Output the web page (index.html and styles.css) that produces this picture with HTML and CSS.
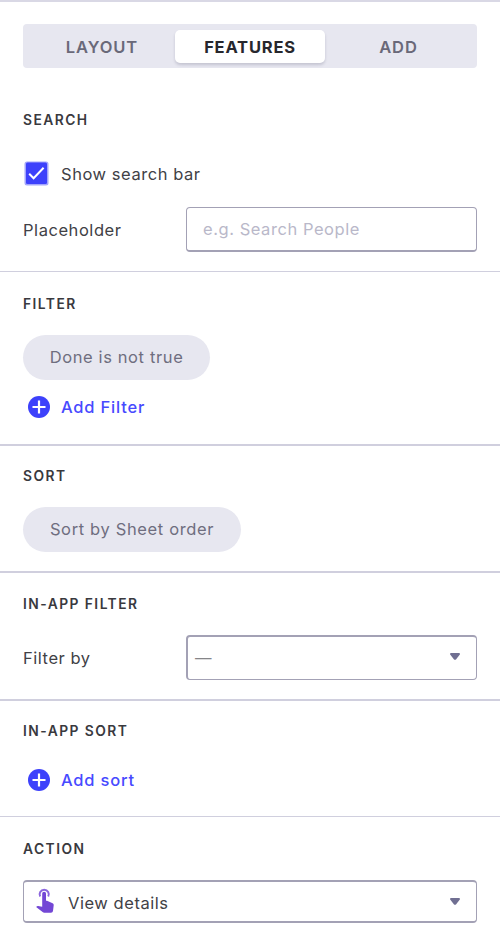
FILE: index.html
```html
<!DOCTYPE html>
<html lang="en">
<head>
<meta charset="utf-8">
<title>Features</title>
<link rel="stylesheet" href="styles.css">
</head>
<body>
<main class="panel">
  <nav class="tabs">
    <span class="tab tab-layout">LAYOUT</span>
    <span class="tab active">FEATURES</span>
    <span class="tab tab-add">ADD</span>
  </nav>
  <section class="section search">
    <h2>SEARCH</h2>
    <div class="check-row">
      <svg class="checkbox" viewBox="0 0 25 25"><rect x=".5" y=".5" width="24" height="24" rx="2.5" fill="#a3a5fb"/><rect x="2" y="1.5" width="21" height="21.5" rx="1.5" fill="#3d41fb"/><path d="M5.2 12.8l4.4 4.4 10-10.4" fill="none" stroke="#fff" stroke-width="2"/></svg>
      <span class="t-show">Show search bar</span>
    </div>
    <div class="field-row">
      <span class="t-placeholder">Placeholder</span>
      <div class="input"><span class="t-hint">e.g. Search People</span></div>
    </div>
  </section>
  <section class="section filter">
    <h2>FILTER</h2>
    <div class="chip chip-filter"><span>Done is not true</span></div>
    <div class="add">
      <svg class="plus" viewBox="0 0 22 22"><circle cx="11" cy="11" r="11"/><path d="M11 4.5v13M4.5 11h13"/></svg>
      <span class="t-addfilter">Add Filter</span>
    </div>
  </section>
  <section class="section sort">
    <h2>SORT</h2>
    <div class="chip chip-sort"><span>Sort by Sheet order</span></div>
  </section>
  <section class="section in-filter">
    <h2>IN-APP FILTER</h2>
    <div class="field-row">
      <span class="t-filterby">Filter by</span>
      <div class="input select"><span class="dash">—</span><svg class="caret" viewBox="0 0 10 7"><path d="M0 1.2Q0 0 1 0h8q1 0 1 1.2L6.2 6.2Q5 7.2 3.8 6.2z"/></svg></div>
    </div>
  </section>
  <section class="section in-sort">
    <h2>IN-APP SORT</h2>
    <div class="add">
      <svg class="plus" viewBox="0 0 22 22"><circle cx="11" cy="11" r="11"/><path d="M11 4.5v13M4.5 11h13"/></svg>
      <span class="t-addsort">Add sort</span>
    </div>
  </section>
  <section class="section action">
    <h2>ACTION</h2>
    <div class="input select action-select">
      <svg class="touch" viewBox="0 0 18 25"><path d="M4.2 8.6A4.6 4.6 0 1 1 12.2 8.6" fill="none" stroke="#8b65de" stroke-width="2"/><path d="M6.2 5.6a1.9 1.9 0 0 1 3.8 0v7.2h1l5.6 2.5q1.3.7 1.1 2L17 23q-.3 1.8-2 1.8H8.3q-1 0-1.7-.8L.4 19.3q-.3-1.4 1.7-1.4l4.1.8z" fill="#7347d5"/></svg>
      <span class="t-view">View details</span>
      <svg class="caret" viewBox="0 0 10 7"><path d="M0 1.2Q0 0 1 0h8q1 0 1 1.2L6.2 6.2Q5 7.2 3.8 6.2z"/></svg>
    </div>
  </section>
</main>
</body>
</html>
```
FILE: styles.css
```css
* { box-sizing: border-box; }
body {
  margin: 0;
  background: #fff;
  color: #414146;
  font: 400 16.5px/24px Inter, "Liberation Sans", sans-serif;
  letter-spacing: .55px;
}
.panel { height: 944px; overflow: hidden; border-top: 2px solid #d9d8e5; }
.tabs {
  display: grid;
  grid-template-columns: 150px 150px 150px;
  justify-content: center;
  align-items: center;
  height: 44px;
  margin: 22px 23px 0;
  border-radius: 4px;
  background: #e7e7f0;
}
.tab {
  height: 33px;
  line-height: 35px;
  text-align: center;
  font-size: 16.5px;
  font-weight: 600;
  letter-spacing: .9px;
  color: #6a6979;
}
.tab-layout { padding-left: 4px; }
.tab-add { padding-right: 3px; }
.tab.active {
  border-radius: 5px;
  background: #fff;
  color: #27272d;
  font-weight: 700;
  letter-spacing: .8px;
  box-shadow: 0 2px 3px rgba(60, 60, 90, .2);
}
h2 {
  margin: 0;
  font-size: 13.8px;
  line-height: 20px;
  font-weight: 600;
  letter-spacing: 1.46px;
  color: #39393e;
}
.section { padding: 0 23px; border-bottom: 2px solid #d0cfde; }
.search { height: 204px; padding-top: 42px; border-bottom-width: 1px; }
.filter { height: 174px; padding-top: 22px; }
.sort { height: 127px; padding-top: 20px; }
.in-filter { height: 128px; padding-top: 21px; }
.in-sort { height: 116px; padding-top: 20px; border-bottom-width: 1px; }
.action { padding-top: 22px; border: 0; }
.check-row { display: flex; align-items: center; gap: 12px; height: 25px; margin-top: 31px; padding-left: 1px; }
.checkbox { width: 25px; height: 25px; }
.field-row { display: grid; grid-template-columns: 163px 291px; align-items: center; }
.search .field-row { margin-top: 21px; }
.in-filter .field-row { margin-top: 21px; }
.input {
  display: flex;
  align-items: center;
  height: 45px;
  padding: 0 16px;
  border: 1px solid #a3a1b5;
  border-bottom-width: 2px;
  border-radius: 4px;
}
.t-hint { color: #b9b8c9; }
.select { justify-content: space-between; padding: 0 16px 0 7px; border-width: 2px 1px 1px 2px; }
.dash { color: #858588; }
.caret { width: 10px; height: 7px; margin: -3px 0 0; fill: #706f92; }
.chip { height: 45px; line-height: 44px; border-radius: 23px; background: #e7e7f0; color: #6f6e7f; text-align: center; white-space: nowrap; }
.filter .chip, .sort .chip { margin-top: 21px; }
.chip-filter { width: 187px; letter-spacing: .62px; }
.chip-sort { width: 218px; line-height: 45px; letter-spacing: .64px; }
.add { display: flex; align-items: center; gap: 11px; height: 24px; padding-left: 5px; color: #474aff; font-weight: 450; letter-spacing: .8px; }
.filter .add { margin-top: 15px; }
.in-sort .add { margin-top: 27px; }
.plus { width: 22px; height: 22px; fill: #3d41fb; }
.plus path { stroke: #fff; stroke-width: 2.2; }
.action-select { height: 43px; margin-top: 21px; padding-left: 12px; border-width: 2px 1px; }
.action-select .caret { margin-top: -1px; }
.touch { width: 18px; height: 25px; margin-top: -3px; }
.t-view { flex: 1; margin: 2px 0 0 14px; }
```
